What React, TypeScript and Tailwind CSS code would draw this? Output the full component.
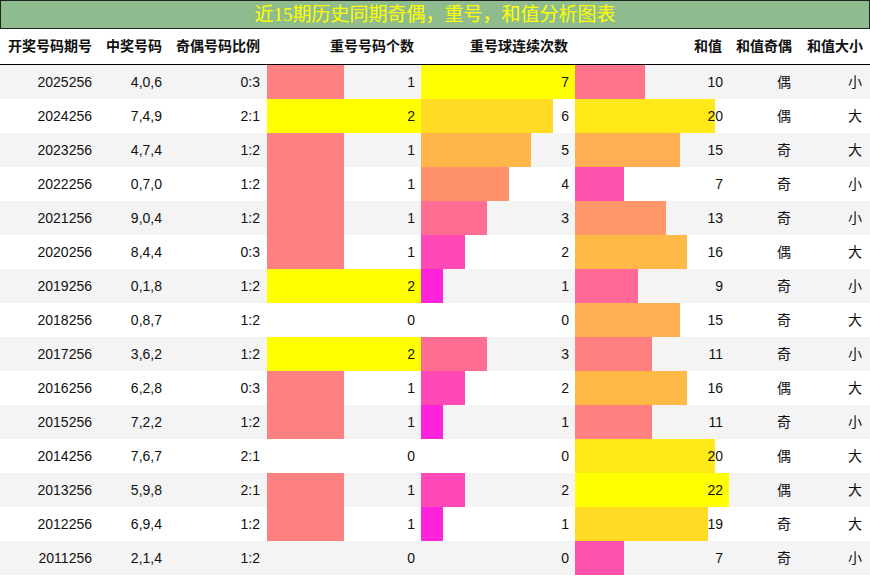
import React from "react";

type Row = [string, string, string, number, number, number, string, string];

const rows: Row[] = [
	["2025256", "4,0,6", "0:3", 1, 7, 10, "偶", "小"],
	["2024256", "7,4,9", "2:1", 2, 6, 20, "偶", "大"],
	["2023256", "4,7,4", "1:2", 1, 5, 15, "奇", "大"],
	["2022256", "0,7,0", "1:2", 1, 4, 7, "奇", "小"],
	["2021256", "9,0,4", "1:2", 1, 3, 13, "奇", "小"],
	["2020256", "8,4,4", "0:3", 1, 2, 16, "偶", "大"],
	["2019256", "0,1,8", "1:2", 2, 1, 9, "奇", "小"],
	["2018256", "0,8,7", "1:2", 0, 0, 15, "奇", "大"],
	["2017256", "3,6,2", "1:2", 2, 3, 11, "奇", "小"],
	["2016256", "6,2,8", "0:3", 1, 2, 16, "偶", "大"],
	["2015256", "7,2,2", "1:2", 1, 1, 11, "奇", "小"],
	["2014256", "7,6,7", "2:1", 0, 0, 20, "偶", "大"],
	["2013256", "5,9,8", "2:1", 1, 2, 22, "偶", "大"],
	["2012256", "6,9,4", "1:2", 1, 1, 19, "奇", "大"],
	["2011256", "2,1,4", "1:2", 0, 0, 7, "奇", "小"],
];

const headers = [
	"开奖号码期号",
	"中奖号码",
	"奇偶号码比例",
	"重号号码个数",
	"重号球连续次数",
	"和值",
	"和值奇偶",
	"和值大小",
];

const grid =
	"grid grid-cols-[99px_70px_98px_154px_154px_154px_70px_71px]";

// magenta -> yellow scale, like the spreadsheet's data bars
const barColor = (v: number, max: number) => {
	const t = v / max;
	return `rgb(255, ${Math.round(255 * t)}, ${Math.round(255 * (1 - t))})`;
};

const BarCell = ({ value, max }: { value: number; max: number }) => (
	<div className="relative flex items-center justify-end pr-[6px]">
		{value > 0 && (
			<div
				className="absolute left-0 top-0 h-full"
				style={{ width: (154 * value) / max, background: barColor(value, max) }}
			/>
		)}
		<span className="relative">{value}</span>
	</div>
);

const App = () => {
	return (
		<div
			className="w-[870px] h-[576px] bg-white text-[#111] text-[14px] overflow-hidden"
			style={{ fontFamily: '"Liberation Sans", "Noto Sans CJK SC", sans-serif' }}
		>
			<div
				className="h-[29px] bg-[#8fbc8f] border border-[#222] flex items-center justify-center text-[19px] text-[#ffff00] leading-none"
				style={{ fontFamily: '"Liberation Serif", "Noto Sans CJK SC", serif' }}
			>
				近15期历史同期奇偶，重号，和值分析图表
			</div>
			<div className={`${grid} h-[36px] border-b border-black font-bold`}>
				{headers.map((h) => (
					<div key={h} className="flex items-center justify-end pr-[7px]">
						{h}
					</div>
				))}
			</div>
			{rows.map((r, i) => (
				<div
					key={r[0]}
					className={`${grid} h-[34px] ${i % 2 === 0 ? "bg-[#f4f4f4]" : "bg-white"}`}
				>
					<div className="flex items-center justify-end pr-[7px]">{r[0]}</div>
					<div className="flex items-center justify-end pr-[7px]">{r[1]}</div>
					<div className="flex items-center justify-end pr-[7px]">{r[2]}</div>
					<BarCell value={r[3]} max={2} />
					<BarCell value={r[4]} max={7} />
					<BarCell value={r[5]} max={22} />
					<div className="flex items-center justify-end pr-[8px]">{r[6]}</div>
					<div className="flex items-center justify-end pr-[8px]">{r[7]}</div>
				</div>
			))}
		</div>
	);
};

export default App;
